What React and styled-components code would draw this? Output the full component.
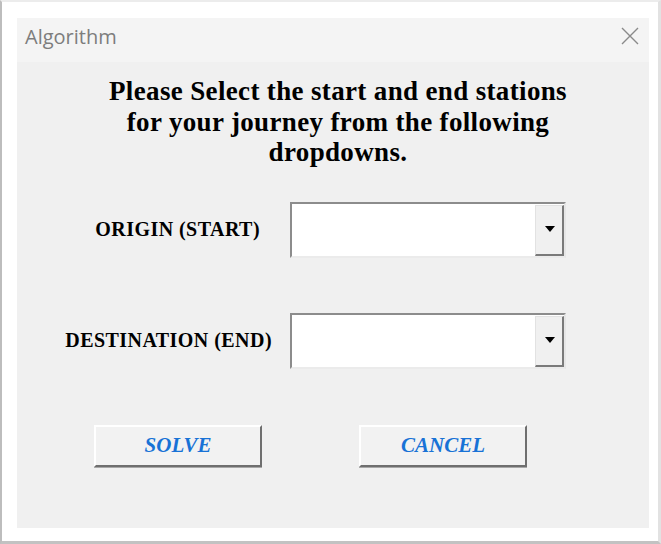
import React from 'react';
import styled, { createGlobalStyle } from 'styled-components';

const GlobalStyle = createGlobalStyle`
  html, body {
    margin: 0;
    padding: 0;
    background: #ffffff;
  }
  * {
    box-sizing: border-box;
  }
`;

const Frame = styled.div`
  width: 661px;
  height: 544px;
  background: #ffffff;
  border-left: 2px solid #bdbdbd;
  border-top: 2px solid #ececec;
  border-right: 3px solid #e2e2e2;
  border-bottom: 3px solid #c2c2c2;
  padding: 16px 9px 13px 15px;
`;

const Dialog = styled.div`
  width: 632px;
  height: 510px;
  background: #f0f0f0;
  display: flex;
  flex-direction: column;
`;

const TitleBar = styled.div`
  height: 44px;
  background: #f4f4f4;
  display: flex;
  justify-content: space-between;
  align-items: flex-start;
  padding: 0 10px 0 8px;
`;

const Title = styled.div`
  font-family: 'Open Sans', 'Noto Sans', sans-serif;
  font-size: 20px;
  line-height: 24px;
  color: #7d7d7d;
  padding-top: 7px;
`;

const CloseButton = styled.button`
  border: none;
  background: none;
  padding: 0;
  margin-top: 9px;
  width: 18px;
  height: 18px;
  display: flex;
  cursor: pointer;
`;

const Body = styled.div`
  flex: 1;
  display: flex;
  flex-direction: column;
  padding-top: 14px;
`;

const Heading = styled.h1`
  margin: 0;
  padding-left: 10px;
  font-family: 'Liberation Serif', 'Times New Roman', serif;
  font-weight: bold;
  font-size: 27px;
  line-height: 30.5px;
  letter-spacing: 0.35px;
  color: #000;
  text-align: center;
`;

const Form = styled.div`
  display: flex;
  flex-direction: column;
  gap: 55px;
  margin-top: 34px;
`;

const Row = styled.div`
  display: grid;
  grid-template-columns: 273px 276px;
  align-items: center;
  height: 56px;
`;

const Label = styled.label`
  font-family: 'Liberation Serif', 'Times New Roman', serif;
  font-weight: bold;
  font-size: 20px;
  letter-spacing: 0.45px;
  color: #000;
  text-align: right;
  white-space: nowrap;
  padding-right: ${(props) => props.$gap}px;
`;

const Combo = styled.div`
  width: 276px;
  height: 56px;
  background: #ffffff;
  border-top: 2px solid #8c8c8c;
  border-left: 2px solid #8c8c8c;
  border-right: 2px solid #e6e6e6;
  border-bottom: 2px solid #ebebeb;
  padding-top: 1px;
  display: flex;
  justify-content: flex-end;
`;

const DropButton = styled.div`
  width: 29px;
  height: 100%;
  background: #f0f0f0;
  border-left: 1px solid #e2e2e2;
  border-top: 1px solid #e2e2e2;
  border-right: 2px solid #7a7a7a;
  border-bottom: 2px solid #7a7a7a;
  display: flex;
  align-items: center;
  justify-content: center;
  padding-bottom: 1px;
  padding-left: 2px;
`;

const Arrow = styled.span`
  width: 0;
  height: 0;
  border-left: 5px solid transparent;
  border-right: 5px solid transparent;
  border-top: 6px solid #000;
`;

const Actions = styled.div`
  display: flex;
  gap: 97px;
  padding-left: 77px;
  margin-top: 56px;
`;

const ActionButton = styled.button`
  width: 168px;
  height: 42px;
  background: #f2f2f2;
  border-top: 2px solid #ffffff;
  border-left: 2px solid #ffffff;
  border-right: 2px solid #6f6f6f;
  border-bottom: 2px solid #6f6f6f;
  box-shadow: 0 1px 0 #a8a8a8;
  font-family: 'Liberation Serif', 'Times New Roman', serif;
  font-weight: bold;
  font-style: italic;
  font-size: 21px;
  color: #1872d6;
  padding: 0;
  cursor: pointer;
`;

const CloseIcon = () => (
  <svg width="18" height="18" viewBox="0 0 18 18">
    <path d="M1 1 L17 17 M17 1 L1 17" stroke="#8a8a8a" strokeWidth="1.4" fill="none" />
  </svg>
);

const App = () => (
  <>
    <GlobalStyle />
    <Frame>
      <Dialog>
        <TitleBar>
          <Title>Algorithm</Title>
          <CloseButton aria-label="Close">
            <CloseIcon />
          </CloseButton>
        </TitleBar>
        <Body>
          <Heading>
            Please Select the start and end stations
            <br />
            for your journey from the following
            <br />
            dropdowns.
          </Heading>
          <Form>
            <Row>
              <Label $gap={30}>ORIGIN (START)</Label>
              <Combo>
                <DropButton>
                  <Arrow />
                </DropButton>
              </Combo>
            </Row>
            <Row>
              <Label $gap={18}>DESTINATION (END)</Label>
              <Combo>
                <DropButton>
                  <Arrow />
                </DropButton>
              </Combo>
            </Row>
          </Form>
          <Actions>
            <ActionButton>SOLVE</ActionButton>
            <ActionButton>CANCEL</ActionButton>
          </Actions>
        </Body>
      </Dialog>
    </Frame>
  </>
);

export default App;
